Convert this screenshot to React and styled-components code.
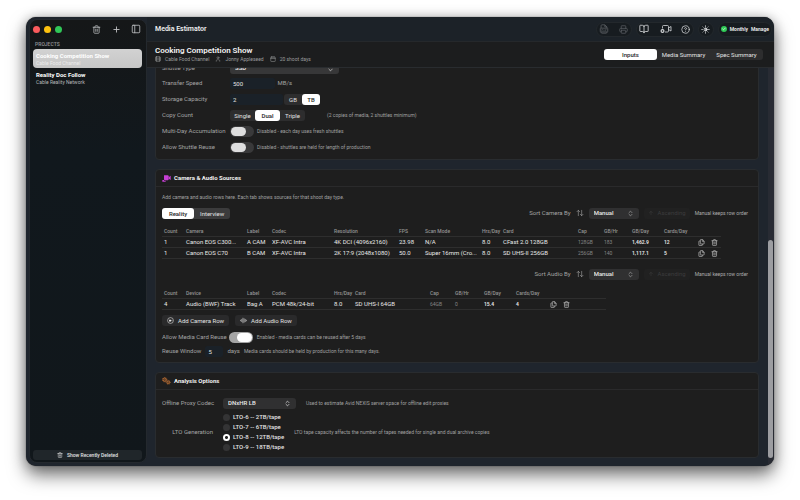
import React, { useState } from "react";
import styled, { createGlobalStyle, css } from "styled-components";
import {
  Trash2, Plus, BookOpen, CircleHelp, Printer, User, Calendar, Film,
  ArrowUp, ArrowUpDown, ChevronsUpDown, Check, PanelLeft,
} from "lucide-react";

const Global = createGlobalStyle`
  * { box-sizing: border-box; }
  html, body { margin: 0; background: #fff; }
  body { overflow: hidden; font-family: Roboto, sans-serif; font-size: 6px; line-height: 8px; color: #e2e2e2; }
  button, input, select { font: inherit; color: inherit; margin: 0; padding: 0; border: 0; background: none; }
  h1, h2, h3, p { margin: 0; font-weight: 400; font-size: inherit; }
  svg { display: block; flex: none; }
`;

const Window = styled.div`
  display: flex;
  height: calc(100vh - 51px);
  margin: 17px 26px 34px;
  border-radius: 10px;
  overflow: hidden;
  background: #1f252d;
  box-shadow: 0 0 1px #222, 0 9px 18px rgba(0, 0, 0, 0.55), 0 0 12px rgba(0, 0, 0, 0.22);
`;

const Sidebar = styled.aside`
  display: flex;
  flex-direction: column;
  flex: none;
  width: 118px;
  margin: 2px 0 3px 3px;
  padding: 0 4px 2px 3px;
  border: 1px solid #24292e;
  border-radius: 8px;
  background: linear-gradient(#151718, #11181d 30%, #11171b);
`;

const SidebarTop = styled.div`
  display: flex;
  align-items: center;
  height: 18px;
`;

const Lights = styled.div`
  display: flex;
  gap: 4px;
  margin-right: auto;
`;

const Light = styled.button`
  width: 7px;
  height: 7px;
  border-radius: 50%;
  background: ${(p) => p.$color};
`;

const SidebarTools = styled.div`
  display: flex;
  gap: 10px;
  padding-right: 1px;
  color: #bfc1c3;
`;

const IconButton = styled.button`
  display: grid;
  place-items: center;
  width: ${(p) => p.$size || 10}px;
  height: ${(p) => p.$size || 10}px;
`;

const SidebarLabel = styled.h2`
  height: 11px;
  padding: 2px 2px 0;
  font-size: 5px;
  font-weight: 600;
  color: #8b8d8f;
  text-transform: uppercase;
`;

const ProjectButton = styled.button`
  display: block;
  width: 100%;
  height: 19px;
  padding: 2px 3px;
  border-radius: 4px;
  text-align: left;
  background: ${(p) => (p.$active ? "linear-gradient(#d2d2d2, #c6c6c6)" : "none")};
`;

const ProjectName = styled.span`
  display: block;
  font-weight: 700;
  color: #fff;
`;

const ProjectClient = styled.span`
  display: block;
  font-size: 5px;
  line-height: 6px;
  color: ${(p) => (p.$active ? "#ebebeb" : "#b5b7b9")};
`;

const DeletedButton = styled.button`
  display: flex;
  align-items: center;
  justify-content: center;
  gap: 4px;
  height: 10px;
  margin-top: auto;
  border-radius: 3px;
  font-size: 5px;
  font-weight: 500;
  background: #20262a;
`;

const Main = styled.main`
  display: flex;
  flex: 1;
  flex-direction: column;
  min-width: 0;
`;

const TitleBar = styled.header`
  display: flex;
  align-items: center;
  flex: none;
  gap: 4px;
  height: 24px;
  padding: 0 2px 0 8px;
  background: #1c2228;
`;

const AppTitle = styled.h1`
  margin-right: auto;
  font-size: 7px;
  font-weight: 600;
  color: #f0f0f0;
`;

const Pill = styled.div`
  display: flex;
  align-items: center;
  gap: ${(p) => p.$gap || 10}px;
  height: 15px;
  padding: 0 2px;
  border: 1px solid #23282c;
  border-radius: 8px;
  background: #171c20;
  color: ${(p) => (p.$dim ? "#5a5e61" : "#d6d8da")};
`;

const PlanText = styled.span`
  font-size: 5px;
  font-weight: 600;
  color: #f2f2f2;
`;

const PlanLink = styled.a`
  font-size: 5px;
  font-weight: 600;
  color: #f2f2f2;
  text-decoration: none;
`;

const PlanBadge = styled.span`
  display: grid;
  place-items: center;
  width: 6px;
  height: 6px;
  border-radius: 50%;
  background: #2fcb56;
  color: #fff;
`;

const ProjectHeader = styled.div`
  display: flex;
  align-items: center;
  justify-content: space-between;
  flex: none;
  height: 27px;
  padding: 0 11px 0 8px;
  border-top: 1px solid #25282b;
  border-bottom: 1px solid #292c2f;
  background: #1c1d1e;
`;

const ProjectTitle = styled.h2`
  font-size: 8px;
  line-height: 9px;
  font-weight: 600;
  color: #f4f4f4;
`;

const MetaRow = styled.div`
  display: flex;
  gap: 6px;
`;

const Meta = styled.span`
  display: flex;
  align-items: center;
  gap: 4px;
  font-size: 5px;
  color: #9b9c9d;
`;

const Segments = styled.div`
  display: flex;
  height: 11px;
  border-radius: 3px;
  background: ${(p) => p.$bg || "#2d2d2e"};
`;

const Segment = styled.button`
  min-width: ${(p) => p.$min || 18}px;
  padding: 0 ${(p) => p.$pad || 0}px;
  border-radius: 3px;
  line-height: 11px;
  white-space: nowrap;
  ${(p) => p.$active && css`
    background: #fff;
    color: #262626;
    font-weight: 500;
  `}
`;

const Body = styled.div`
  display: flex;
  flex: 1;
  min-height: 0;
`;

const Content = styled.div`
  display: flex;
  flex: 1;
  flex-direction: column;
  justify-content: flex-end;
  gap: 9px;
  min-width: 0;
  overflow: hidden;
  padding: 0 9px 8px 8px;
`;

const ScrollTrack = styled.div`
  display: flex;
  flex: none;
  flex-direction: column;
  justify-content: flex-end;
  width: 6px;
  padding: 0 1px 8px 0;
  background: #282b33;
`;

const ScrollThumb = styled.div`
  height: 56%;
  border-radius: 3px;
  background: #9c9da1;
`;

const Card = styled.section`
  flex: none;
  border: 1px solid #292c2f;
  border-radius: 4px;
  background: #1e1e1e;
`;

const CardHead = styled.div`
  display: flex;
  align-items: center;
  gap: 3px;
  height: 17px;
  padding: 0 6px;
  border-bottom: 1px solid #2a2a2b;
`;

const CardTitle = styled.h3`
  font-weight: 700;
  color: #f0f0f0;
`;

const CardBody = styled.div`
  display: flex;
  flex-direction: column;
  padding: ${(p) => p.$top || 0}px 6px ${(p) => p.$bottom || 5}px;
`;

const Row = styled.div`
  display: flex;
  align-items: center;
  gap: ${(p) => p.$gap || 4}px;
  height: ${(p) => p.$h || 12}px;
  margin-top: ${(p) => p.$mt || 0}px;
`;

const Label = styled.label`
  width: ${(p) => (p.$w ? `${p.$w}px` : "auto")};
  text-align: ${(p) => (p.$right ? "right" : "left")};
  white-space: nowrap;
  color: #a4a4a4;
`;

const Hint = styled.span`
  margin-left: ${(p) => p.$ml || 0}px;
  font-size: 5px;
  white-space: nowrap;
  color: ${(p) => p.$color || "#a0a0a0"};
`;

const Field = styled.input`
  width: ${(p) => p.$w || 45}px;
  height: 11px;
  padding: 0 3px;
  border-radius: 2px;
  background: #1a2128;
`;

const SelectBox = styled.span`
  display: grid;
  grid-template-columns: 1fr 12px;
  align-items: center;
  width: ${(p) => p.$w || 50}px;
  height: 11px;
  border-radius: 3px;
  background: ${(p) => p.$bg || "#303031"};

  & > select {
    grid-area: 1 / 1 / 2 / 3;
    height: 11px;
    padding-left: 5px;
    appearance: none;
    font-weight: 500;
    color: #e8e8e8;
  }
  & > svg {
    grid-area: 1 / 2 / 2 / 3;
    pointer-events: none;
  }
`;

const Switch = styled.input`
  display: flex;
  align-items: center;
  flex: none;
  width: 24px;
  height: 11px;
  padding: 1px;
  border-radius: 6px;
  appearance: none;
  background: #39393a;

  &::before {
    content: "";
    width: 15px;
    height: 9px;
    border-radius: 5px;
    background: #dedede;
  }
  &:checked {
    justify-content: flex-end;
    background: #a5a5a5;
  }
  &:checked::before {
    background: #fff;
  }
`;

const Order = styled.button`
  display: flex;
  align-items: center;
  justify-content: center;
  gap: 4px;
  width: 46px;
  height: 11px;
  border-radius: 3px;
  background: #212121;

  &:disabled {
    color: #3c3c3d;
  }
`;

const Sort = styled.div`
  display: flex;
  align-items: center;
  gap: 5px;
  height: 12px;
  margin: ${(p) => p.$mt || 0}px 0 0 auto;
  padding-right: 4px;
  color: #a4a4a4;
`;

const Intro = styled.p`
  margin-bottom: 5px;
  font-size: 5px;
  line-height: 10px;
  color: #a2a2a2;
`;

const Table = styled.table`
  width: ${(p) => p.$w}px;
  max-width: 100%;
  margin-top: ${(p) => p.$mt}px;
  border-collapse: separate;
  border-spacing: 0;
  table-layout: fixed;
`;

const Col = styled.col`
  width: ${(p) => p.$w}px;
`;

const Th = styled.th`
  height: 11px;
  padding: 0 0 0 2px;
  border-bottom: 1px solid #2e2e2e;
  font-size: 5px;
  font-weight: 500;
  text-align: left;
  white-space: nowrap;
  color: #939393;
`;

const Td = styled.td`
  height: 11px;
  padding: 0 0 0 2px;
  border-bottom: 1px solid #2e2e2e;
  overflow: hidden;
  white-space: nowrap;
  color: #e8e8e8;
  ${(p) => p.$kind === "dim" && css`
    font-size: 5px;
    color: #858585;
  `}
  ${(p) => p.$kind === "strong" && css`
    font-size: 5px;
    font-weight: 600;
  `}
`;

const Actions = styled.div`
  display: flex;
  gap: 5px;
  color: #b4b4b4;
`;

const AddButton = styled.button`
  display: flex;
  align-items: center;
  gap: 4px;
  height: 11px;
  padding: 0 5px;
  border-radius: 3px;
  background: #2a2a2b;
`;

const RadioList = styled.div`
  display: flex;
  flex-direction: column;
`;

const RadioLabel = styled.label`
  display: flex;
  align-items: center;
  gap: 3px;
  height: 10px;
  font-weight: 500;
`;

const Radio = styled.input`
  width: 7px;
  height: 7px;
  border-radius: 50%;
  appearance: none;
  background: #343435;

  &:checked {
    background: radial-gradient(circle, #202020 1px, #fff 2px);
  }
`;

const VideoPlus = () => (
  <svg width="12" height="10" viewBox="0 0 24 20" fill="none" stroke="currentColor" strokeWidth="1.6">
    <path d="M5 9V5a2 2 0 0 1 2-2h8a2 2 0 0 1 2 2v9a2 2 0 0 1-2 2h-5M17 8l5-3v9l-5-3" />
    <circle cx="5" cy="14" r="4" fill="currentColor" stroke="none" />
    <path d="M5 12v4M3 14h4" stroke="#171c20" strokeWidth="1.2" />
  </svg>
);

const PdfFile = () => (
  <svg width="10" height="10" viewBox="0 0 24 24" fill="none" stroke="currentColor" strokeWidth="2">
    <path d="M5 10V4a2 2 0 0 1 2-2h7l5 5v3M14 2v5h5M5 19v1a2 2 0 0 0 2 2h10a2 2 0 0 0 2-2v-1" />
    <rect x="3" y="10" width="18" height="9" rx="1" />
    <path d="M7 17v-4h2M12 13v4M16 17v-4h2" strokeWidth="1.5" />
  </svg>
);

const DuplicateIcon = () => (
  <svg width="7" height="7" viewBox="0 0 24 24" fill="none" stroke="currentColor" strokeWidth="2.4" strokeLinejoin="round">
    <path d="M9 2h7l5 5v9a1 1 0 0 1-1 1H9a1 1 0 0 1-1-1V3a1 1 0 0 1 1-1zM15 2v6h6" />
    <path d="M8 7H4a1 1 0 0 0-1 1v13a1 1 0 0 0 1 1h10a1 1 0 0 0 1-1v-4" />
  </svg>
);

const CameraCircle = () => (
  <svg width="7" height="7" viewBox="0 0 24 24" fill="none" stroke="currentColor" strokeWidth="2">
    <circle cx="12" cy="12" r="10" />
    <path d="M7 9h7v6H7zM14 12l4-2v4z" fill="currentColor" stroke="none" />
  </svg>
);

const HalfSun = () => (
  <svg width="9" height="9" viewBox="0 0 24 24" fill="none" stroke="currentColor" strokeWidth="2" strokeLinecap="round">
    <circle cx="12" cy="12" r="4" />
    <path d="M12 8a4 4 0 0 1 0 8z" fill="currentColor" />
    <path d="M12 2v2M12 20v2M2 12h2M20 12h2M5 5l1 1M18 18l1 1M5 19l1-1M18 6l1-1" />
  </svg>
);

const CameraMark = () => (
  <svg width="9" height="7" viewBox="0 0 27 21" fill="#c63fd3">
    <path d="M6 1h11a3 3 0 0 1 3 3v9a3 3 0 0 1-3 3H9a3 3 0 0 1-3-3z" />
    <path d="M20 7l6-5v13l-6-4z" />
    <path d="M1 15h5v2h5v3H1z" />
  </svg>
);

const Gears = () => (
  <svg width="9" height="8" viewBox="0 0 27 24" fill="none" stroke="#bb6f35">
    <circle cx="8" cy="8" r="5" strokeWidth="3" />
    <circle cx="8" cy="8" r="7" strokeWidth="2" strokeDasharray="2.5 3" />
    <path d="M8 8h5M8 8l-3 4M8 8L5 4" strokeWidth="1.5" />
    <circle cx="19" cy="16" r="4" strokeWidth="3" />
    <circle cx="19" cy="16" r="6" strokeWidth="2" strokeDasharray="2.2 2.5" />
    <circle cx="19" cy="16" r="1" strokeWidth="1.5" />
  </svg>
);

const Wave = () => (
  <svg width="7" height="7" viewBox="0 0 24 24" stroke="currentColor" strokeWidth="2" strokeLinecap="round">
    <path d="M2 11v2M6 8v8M10 4v16M14 6v12M18 8v8M22 11v2" />
  </svg>
);

const SortIcon = () => <ArrowUpDown size={8} strokeWidth={1.8} />;

function Select({ id, w, bg, value }) {
  return (
    <SelectBox $w={w} $bg={bg}>
      <select id={id} defaultValue={value}>
        <option>{value}</option>
      </select>
      <ChevronsUpDown size={7} strokeWidth={2.4} />
    </SelectBox>
  );
}

function SegmentGroup({ options, initial, label, min, pad, bg }) {
  const [value, setValue] = useState(initial);
  return (
    <Segments role="group" aria-label={label} $bg={bg}>
      {options.map((o) => (
        <Segment key={o} $active={o === value} aria-pressed={o === value} $min={min} $pad={pad} onClick={() => setValue(o)}>
          {o}
        </Segment>
      ))}
    </Segments>
  );
}

function SortControls({ kind, mt }) {
  const id = `sort-${kind}`;
  return (
    <Sort $mt={mt}>
      <Label htmlFor={id}>Sort {kind} By</Label>
      <SortIcon />
      <Select id={id} value="Manual" />
      <Order disabled><ArrowUp size={6} />Ascending</Order>
      <Hint $color="#acacac">Manual keeps row order</Hint>
    </Sort>
  );
}

function Sources({ columns, rows, width, mt }) {
  return (
    <Table $w={width} $mt={mt}>
      <colgroup>{columns.map(([name, w]) => <Col key={name} $w={w} />)}</colgroup>
      <thead>
        <tr>{columns.map(([name]) => <Th key={name} scope="col">{name === "actions" ? "" : name}</Th>)}</tr>
      </thead>
      <tbody>
        {rows.map((row) => (
          <tr key={row[1]}>
            {row.map((cell, i) => <Td key={columns[i][0]} $kind={columns[i][2]}>{cell}</Td>)}
            <Td>
              <Actions>
                <IconButton $size={8} aria-label="Duplicate"><DuplicateIcon /></IconButton>
                <IconButton $size={8} aria-label="Delete"><Trash2 size={7} strokeWidth={2.4} /></IconButton>
              </Actions>
            </Td>
          </tr>
        ))}
      </tbody>
    </Table>
  );
}

const cameraColumns = [
  ["Count", 22], ["Camera", 61], ["Label", 25], ["Codec", 62], ["Resolution", 65], ["FPS", 26],
  ["Scan Mode", 57], ["Hrs/Day", 21], ["Card", 75], ["Cap", 26, "dim"], ["GB/Hr", 28, "dim"],
  ["GB/Day", 32, "strong"], ["Cards/Day", 33, "strong"], ["actions", 26],
];
const cameraRows = [
  ["1", "Canon EOS C300...", "A CAM", "XF-AVC Intra", "4K DCI (4096x2160)", "23.98", "N/A", "8.0", "CFast 2.0 128GB", "128GB", "183", "1,462.9", "12"],
  ["1", "Canon EOS C70", "B CAM", "XF-AVC Intra", "2K 17:9 (2048x1080)", "50.0", "Super 16mm (Cro...", "8.0", "SD UHS-II 256GB", "256GB", "140", "1,117.1", "5"],
];
const audioColumns = [
  ["Count", 22], ["Device", 61], ["Label", 25], ["Codec", 62], ["Hrs/Day", 21], ["Card", 75],
  ["Cap", 25, "dim"], ["GB/Hr", 29, "dim"], ["GB/Day", 32, "strong"], ["Cards/Day", 33, "strong"], ["actions", 59],
];
const audioRows = [
  ["4", "Audio (BWF) Track", "Bag A", "PCM 48k/24-bit", "8.0", "SD UHS-I 64GB", "64GB", "0", "15.4", "4"],
];
const projects = [
  ["Cooking Competition Show", "Cable Food Channel"],
  ["Reality Doc Follow", "Cable Reality Network"],
];
const tapes = ["LTO-6 -- 2TB/tape", "LTO-7 -- 6TB/tape", "LTO-8 -- 12TB/tape", "LTO-9 -- 18TB/tape"];

export default function App() {
  const [active, setActive] = useState(0);
  return (
    <>
      <Global />
      <Window>
        <Sidebar>
          <SidebarTop>
            <Lights>
              <Light $color="#fb5b5d" aria-label="Close" />
              <Light $color="#fdc20f" aria-label="Minimize" />
              <Light $color="#30c758" aria-label="Zoom" />
            </Lights>
            <SidebarTools>
              <IconButton aria-label="Delete project"><Trash2 size={9} /></IconButton>
              <IconButton aria-label="Add project"><Plus size={9} strokeWidth={2.4} /></IconButton>
              <IconButton aria-label="Toggle sidebar"><PanelLeft size={10} /></IconButton>
            </SidebarTools>
          </SidebarTop>
          <SidebarLabel>Projects</SidebarLabel>
          {projects.map(([name, client], i) => (
            <ProjectButton key={name} $active={i === active} onClick={() => setActive(i)}>
              <ProjectName>{name}</ProjectName>
              <ProjectClient $active={i === active}>{client}</ProjectClient>
            </ProjectButton>
          ))}
          <DeletedButton><Trash2 size={6} />Show Recently Deleted</DeletedButton>
        </Sidebar>

        <Main>
          <TitleBar>
            <AppTitle>Media Estimator</AppTitle>
            <Pill $dim>
              <IconButton aria-label="Export PDF"><PdfFile /></IconButton>
              <IconButton aria-label="Print"><Printer size={9} /></IconButton>
            </Pill>
            <Pill $gap={11}>
              <IconButton aria-label="Library"><BookOpen size={10} /></IconButton>
              <IconButton aria-label="Add camera"><VideoPlus /></IconButton>
              <IconButton aria-label="Help"><CircleHelp size={9} /></IconButton>
            </Pill>
            <Pill>
              <IconButton aria-label="Appearance"><HalfSun /></IconButton>
            </Pill>
            <Pill $gap={3}>
              <PlanBadge><Check size={4} strokeWidth={4} /></PlanBadge>
              <PlanText>Monthly</PlanText>
              <PlanLink href="#manage">Manage</PlanLink>
            </Pill>
          </TitleBar>

          <ProjectHeader>
            <div>
              <ProjectTitle>Cooking Competition Show</ProjectTitle>
              <MetaRow>
                <Meta><Film size={6} />Cable Food Channel</Meta>
                <Meta><User size={6} />Jonny Appleseed</Meta>
                <Meta><Calendar size={6} />20 shoot days</Meta>
              </MetaRow>
            </div>
            <SegmentGroup label="View" options={["Inputs", "Media Summary", "Spec Summary"]} initial="Inputs" min={53} />
          </ProjectHeader>

          <Body>
            <Content>
              <Card>
                <CardBody $bottom={6}>
                  <Row $gap={1}>
                    <Label $w={67} htmlFor="shuttle">Shuttle Type</Label>
                    <Select id="shuttle" w={109} bg="#373738" value="SSD" />
                  </Row>
                  <Row $mt={3} $gap={1}>
                    <Label $w={67} htmlFor="speed">Transfer Speed</Label>
                    <Field id="speed" defaultValue="500" />
                    <Label as="span">&nbsp;MB/s</Label>
                  </Row>
                  <Row $mt={4} $gap={1}>
                    <Label $w={67} htmlFor="capacity">Storage Capacity</Label>
                    <Field id="capacity" $w={53} defaultValue="2" />
                    <SegmentGroup label="Capacity unit" options={["GB", "TB"]} initial="TB" />
                  </Row>
                  <Row $mt={4} $gap={1}>
                    <Label $w={67} as="span">Copy Count</Label>
                    <SegmentGroup label="Copy Count" options={["Single", "Dual", "Triple"]} initial="Dual" min={25} />
                    <Hint $ml={21}>(2 copies of media, 2 shuttles minimum)</Hint>
                  </Row>
                  <Row $mt={4} $gap={1}>
                    <Label $w={67} htmlFor="multiday">Multi-Day Accumulation</Label>
                    <Switch type="checkbox" id="multiday" />
                    <Hint $ml={2}>Disabled - each day uses fresh shuttles</Hint>
                  </Row>
                  <Row $mt={4} $gap={1}>
                    <Label $w={67} htmlFor="reuse-shuttle">Allow Shuttle Reuse</Label>
                    <Switch type="checkbox" id="reuse-shuttle" />
                    <Hint $ml={2}>Disabled - shuttles are held for length of production</Hint>
                  </Row>
                </CardBody>
              </Card>

              <Card>
                <CardHead><CameraMark /><CardTitle>Camera &amp; Audio Sources</CardTitle></CardHead>
                <CardBody $top={5}>
                  <Intro>Add camera and audio rows here. Each tab shows sources for that shoot day type.</Intro>
                  <Row>
                    <SegmentGroup label="Shoot day type" options={["Reality", "Interview"]} initial="Reality" min={32} pad={6} bg="#3b3b3c" />
                    <SortControls kind="Camera" />
                  </Row>
                  <Sources columns={cameraColumns} rows={cameraRows} width={559} mt={7} />
                  <SortControls kind="Audio" mt={9} />
                  <Sources columns={audioColumns} rows={audioRows} width={444} mt={8} />
                  <Row $mt={5} $h={11} $gap={6}>
                    <AddButton><CameraCircle />Add Camera Row</AddButton>
                    <AddButton><Wave />Add Audio Row</AddButton>
                  </Row>
                  <Row $mt={5} $gap={2}>
                    <Label htmlFor="reuse-cards">Allow Media Card Reuse</Label>
                    <Switch type="checkbox" id="reuse-cards" defaultChecked />
                    <Hint $ml={2}>Enabled - media cards can be reused after 5 days</Hint>
                  </Row>
                  <Row $mt={2}>
                    <Label htmlFor="window">Reuse Window</Label>
                    <Field id="window" $w={18} defaultValue="5" />
                    <Label as="span">days</Label>
                    <Hint>Media cards should be held by production for this many days.</Hint>
                  </Row>
                </CardBody>
              </Card>

              <Card>
                <CardHead><Gears /><CardTitle>Analysis Options</CardTitle></CardHead>
                <CardBody $top={7}>
                  <Row $gap={10}>
                    <Label $w={51} htmlFor="proxy">Offline Proxy Codec</Label>
                    <Select id="proxy" w={73} value="DNxHR LB" />
                    <Hint>Used to estimate Avid NEXIS server space for offline edit proxies</Hint>
                  </Row>
                  <Row $mt={3} $gap={10} $h={40}>
                    <Label $w={51} $right as="span" id="lto-label">LTO Generation</Label>
                    <RadioList role="radiogroup" aria-labelledby="lto-label">
                      {tapes.map((t) => (
                        <RadioLabel key={t}>
                          <Radio type="radio" name="lto" defaultChecked={t.startsWith("LTO-8")} />{t}
                        </RadioLabel>
                      ))}
                    </RadioList>
                    <Hint>LTO tape capacity affects the number of tapes needed for single and dual archive copies</Hint>
                  </Row>
                </CardBody>
              </Card>
            </Content>
            <ScrollTrack><ScrollThumb /></ScrollTrack>
          </Body>
        </Main>
      </Window>
    </>
  );
}
